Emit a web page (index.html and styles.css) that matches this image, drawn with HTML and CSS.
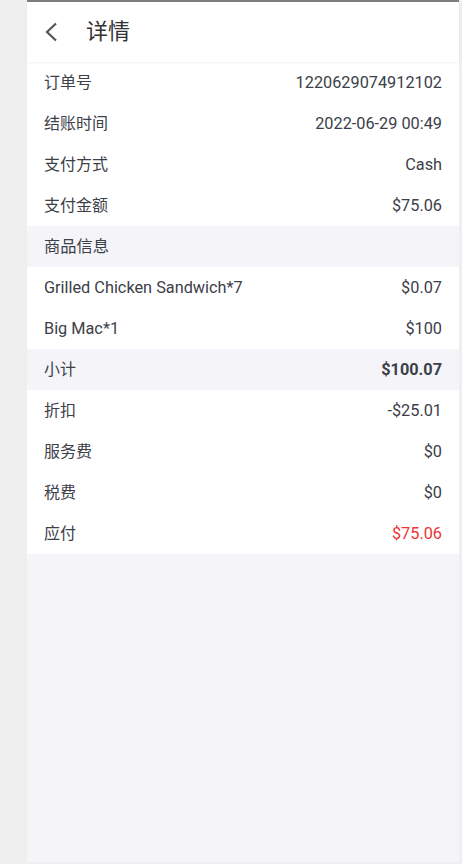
FILE: index.html
```html
<!DOCTYPE html>
<html lang="zh-CN">
<head>
    <meta charset="UTF-8">
    <meta name="viewport" content="width=device-width, initial-scale=1">
    <link rel="stylesheet" href="styles.css">
</head>
<body>

<div class="app">
    <div class="header">
        <span class="back">
            <svg width="14" height="20" viewBox="0 0 14 20">
                <polyline points="12,1.5 3,10 12,18.5" fill="none" stroke="#555" stroke-width="2.2"/>
            </svg>
        </span>
        <span class="title">详情</span>
    </div>

    <div class="list">
        <div class="row"><span>订单号</span><span>1220629074912102</span></div>
        <div class="row"><span>结账时间</span><span>2022-06-29 00:49</span></div>
        <div class="row"><span>支付方式</span><span>Cash</span></div>
        <div class="row"><span>支付金额</span><span>$75.06</span></div>

        <div class="row section"><span>商品信息</span></div>
        <div class="row"><span class="en">Grilled Chicken Sandwich*7</span><span>$0.07</span></div>
        <div class="row"><span class="en">Big Mac*1</span><span>$100</span></div>

        <div class="row section"><span>小计</span><span class="bold">$100.07</span></div>
        <div class="row"><span>折扣</span><span>-$25.01</span></div>
        <div class="row"><span>服务费</span><span>$0</span></div>
        <div class="row"><span>税费</span><span>$0</span></div>
        <div class="row"><span>应付</span><span class="red">$75.06</span></div>
    </div>
</div>

</body>
</html>
```

FILE: styles.css
```css
* {
    box-sizing: border-box;
}

body {
    margin: 0;
    background-color: #efefef;
    font-family: Roboto, "Noto Sans CJK SC", sans-serif;
    color: #3c4048;
}

.app {
    margin-left: 27px;
    width: 432px;
    height: 862px;
    background-color: #f5f5f9;
    border-top: 2px solid #7d7d7d;
}

.header {
    height: 60px;
    background-color: #fff;
    display: flex;
    align-items: center;
    padding-left: 17px;
    box-shadow: 0 1px 3px rgba(0, 0, 0, 0.06);
    position: relative;
}

.back {
    display: flex;
    width: 14px;
    margin-right: 28px;
}

.title {
    font-size: 22px;
    line-height: 26px;
    color: #333;
}

.list {
    background-color: #fff;
}

.row {
    height: 41px;
    display: flex;
    align-items: center;
    justify-content: space-between;
    padding: 0 17px;
    font-size: 16px;
    line-height: 20px;
}

.row span:last-child,
.row .en {
    font-size: 16.3px;
}

.row.section {
    background-color: #f4f4f9;
}

.bold {
    font-weight: bold;
}

.red {
    color: #ec3535;
}
```
